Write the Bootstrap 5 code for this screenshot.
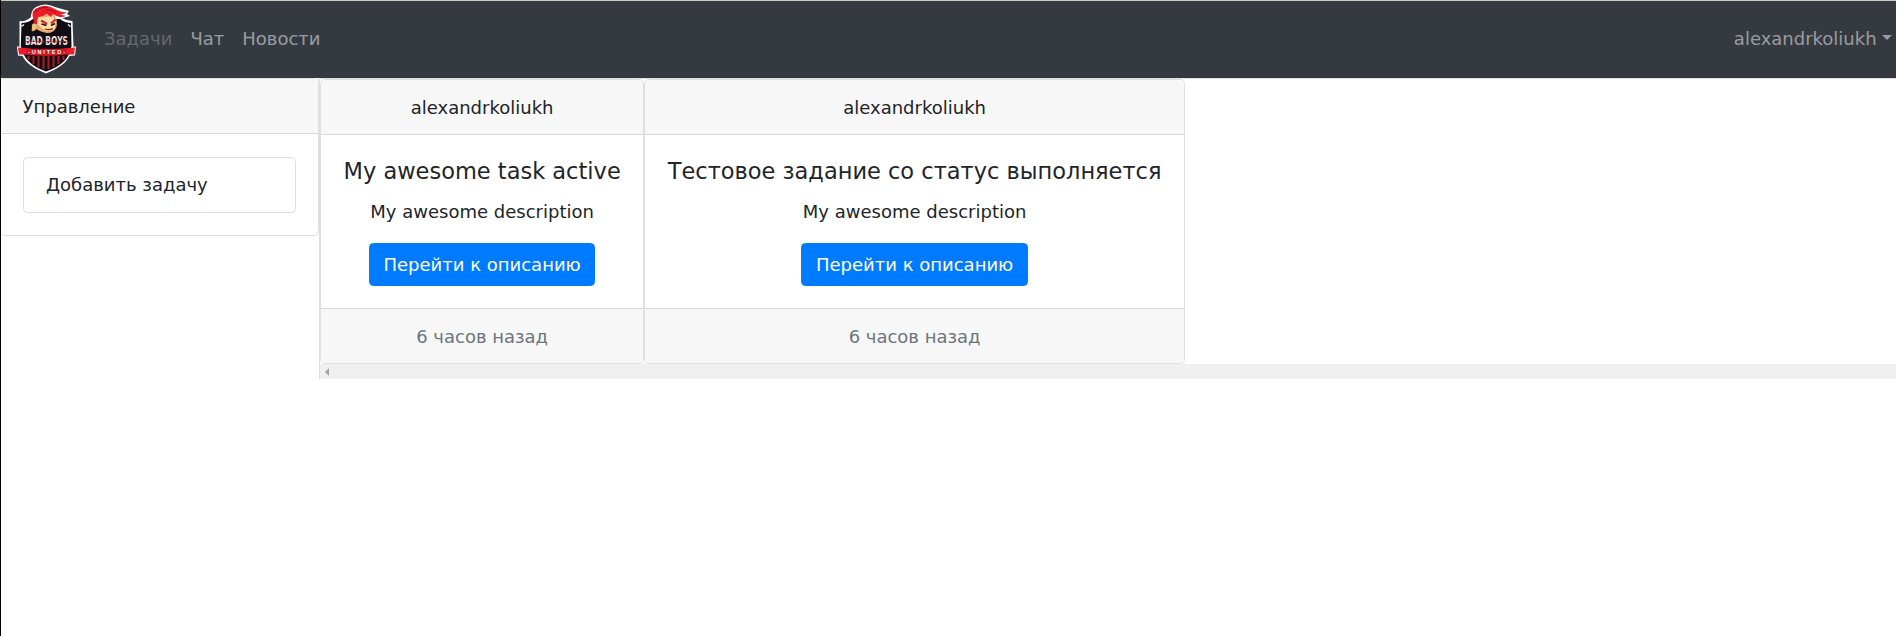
<!DOCTYPE html>
<html lang="ru">
<head>
<meta charset="utf-8">
<title>Задачи</title>
<link href="https://cdn.jsdelivr.net/npm/bootstrap@5.3.0/dist/css/bootstrap.min.css" rel="stylesheet">
<style>
html{font-size:18px}
body{font-family:"DejaVu Sans",sans-serif;color:#212529;background:#fff;border-left:1px solid #000;min-height:636px;overflow:hidden}
.topbar{height:78px;background:#343a40;border-top:1px solid #c9c9c1;margin-left:-1px;padding:0 0 2px}
.topbar .nav-link{color:rgba(255,255,255,.5);padding:9px;line-height:27px}
.topbar .nav-link.disabled{color:rgba(255,255,255,.25)}
.topbar .dropdown-toggle::after{vertical-align:.255em;margin-left:5.4px}
.topbar .user-menu{margin-right:-5px}
.logo{margin-left:16px;margin-right:18px}
.logo svg{overflow:visible}
.card{--bs-card-border-color:#dfdfdf;--bs-card-border-radius:4.5px;--bs-card-inner-border-radius:3.5px;--bs-card-cap-bg:#f7f7f7;--bs-card-cap-padding-y:13.5px;--bs-card-cap-padding-x:22.5px;--bs-card-spacer-x:22.5px;--bs-card-spacer-y:22.5px}
.card-header{border-bottom-color:#d8d8d8}
.card-footer{border-top-color:#d8d8d8}
.sidebar{width:318px}
.sidebar>.card{margin-left:-2px}
.sidebar .card-body .card-body{padding:13.5px 22.5px}
.tasks{border-left:1px solid #dfdfdf;border-top:1px solid #dfdfdf;min-width:0}
.task-title{font-size:22.5px;line-height:27px;margin-bottom:13.5px;white-space:nowrap;font-weight:400}
.task-text{margin-bottom:18px}
.btn-primary{--bs-btn-bg:#007bff;--bs-btn-border-color:#007bff;--bs-btn-padding-x:13.5px;--bs-btn-padding-y:6.75px;--bs-btn-border-radius:4.5px;height:42.75px}
.when{color:#6c757d}
.track{height:15px;background:#f0f0f0;padding-left:5px}
</style>
</head>
<body>
<nav class="topbar navbar navbar-expand d-flex flex-nowrap justify-content-start">
  <a class="logo d-flex" href="#" aria-label="Bad Boys United">
    <svg width="61" height="72" viewBox="0 0 61 72">
      <path d="M3.500 18Q10 19 15 14Q15 7 20 4Q29-1 39 4L53 8L51 11L54 13L47 15L46 15Q51 18 56.500 18L57.500 43.500L60 43.500L59 52.500L53.500 53Q49 63 30 70.500Q11 63 6.500 53L2 52.500L1 43.500L3.500 43.500Z" fill="#fff"/>
      <path d="M5.500 20Q12 20 17 16L44 16Q49 20 55 20L55.500 43Q53 61 30 68.500Q8 61 4.800 43Z" fill="#100d14"/>
      <path d="M12.500 53V57M17.500 53V61M22.500 53V64M27.500 53V66M32.500 53V66M37.500 53V64M42.500 53V61M47.500 53V57" stroke="#a91c20" stroke-width="2"/>
      <path d="M18 13L38 11Q42 17 40.500 24Q38 30 31 30Q24 29 18.500 25Z" fill="#e9a768"/>
      <path d="M20 15L29 14L37 13L40 19L38.500 26Q35 29 29 27.500L22 22Z" fill="#ffdca8"/>
      <ellipse cx="18" cy="24" rx="2.200" ry="3.800" fill="#f4be86"/>
      <circle cx="16.700" cy="27" r="1.200" fill="#e8c12c"/>
      <path d="M17.500 17Q14.500 9 20 5.500Q29 0 38 5.500Q43 9 51 9.500Q46 11.500 44 11.500L50 13Q43 16 37 11L35 14L31 11L27 13L22 14L21 21L18.500 21Z" fill="#ed1c2a"/>
      <path d="M19 10Q22 4 32 4.500M30 7Q36 6 40 10" fill="none" stroke="#a91522" stroke-width="1.200"/>
      <path d="M25 17.500L31 21M35 20.500L39.500 16.500" stroke="#d7242c" stroke-width="2.200"/>
      <path d="M25.500 21L30.500 22.500M35 22.500L39 20.500" stroke="#271419" stroke-width="1.500"/>
      <path d="M29 26Q33 27.500 37 25.500" fill="none" stroke="#68221d" stroke-width="1.200"/>
      <path d="M5.500 23.500L8 21.500M54.500 23.500L52 21.500" fill="none" stroke="#eee" stroke-width="1.500"/>
      <path d="M2 44.500Q31 48 59 44.500L58 51.500L50 51.500Q31 54 10 51.500L3 51.500Z" fill="#ed1c2a"/>
      <path d="M10 45.500Q31 47.500 51 45.500V51Q31 53 10 51Z" fill="#d91422"/>
      <text x="9" y="42" textLength="43" lengthAdjust="spacingAndGlyphs" font-family="DejaVu Sans" font-size="12.500" font-weight="700" fill="#eadfdc">BAD BOYS</text>
      <path d="M9 38.500H52" stroke="#b5252b" stroke-width="1" opacity=".65"/>
      <text x="12" y="51" textLength="37" font-family="Liberation Sans" font-size="5.500" font-weight="700" fill="#fff">-UNITED-</text>
    </svg>
  </a>
  <div class="navbar-nav">
    <a class="nav-link disabled">Задачи</a>
    <a class="nav-link" href="#">Чат</a>
    <a class="nav-link" href="#">Новости</a>
  </div>
  <div class="navbar-nav user-menu ms-auto">
    <a class="nav-link dropdown-toggle" href="#">alexandrkoliukh</a>
  </div>
</nav>
<main class="d-flex align-items-start">
  <aside class="sidebar flex-shrink-0">
    <div class="card">
      <div class="card-header">Управление</div>
      <div class="card-body">
        <div class="card"><div class="card-body">Добавить задачу</div></div>
      </div>
    </div>
  </aside>
  <section class="tasks flex-grow-1">
    <div class="d-flex">
      <div class="card text-center flex-shrink-0">
        <div class="card-header">alexandrkoliukh</div>
        <div class="card-body">
          <h5 class="task-title">My awesome task active</h5>
          <p class="task-text">My awesome description</p>
          <a class="btn btn-primary" href="#">Перейти к описанию</a>
        </div>
        <div class="card-footer when">6 часов назад</div>
      </div>
      <div class="card text-center flex-shrink-0">
        <div class="card-header">alexandrkoliukh</div>
        <div class="card-body">
          <h5 class="task-title">Тестовое задание со статус выполняется</h5>
          <p class="task-text">My awesome description</p>
          <a class="btn btn-primary" href="#">Перейти к описанию</a>
        </div>
        <div class="card-footer when">6 часов назад</div>
      </div>
    </div>
    <div class="track d-flex align-items-center"><svg width="4" height="8" viewBox="0 0 4 8"><path d="M4 0V8L0 4Z" fill="#a3a3a3"/></svg></div>
  </section>
</main>
<script src="https://cdn.jsdelivr.net/npm/bootstrap@5.3.0/dist/js/bootstrap.bundle.min.js"></script>
</body>
</html>
